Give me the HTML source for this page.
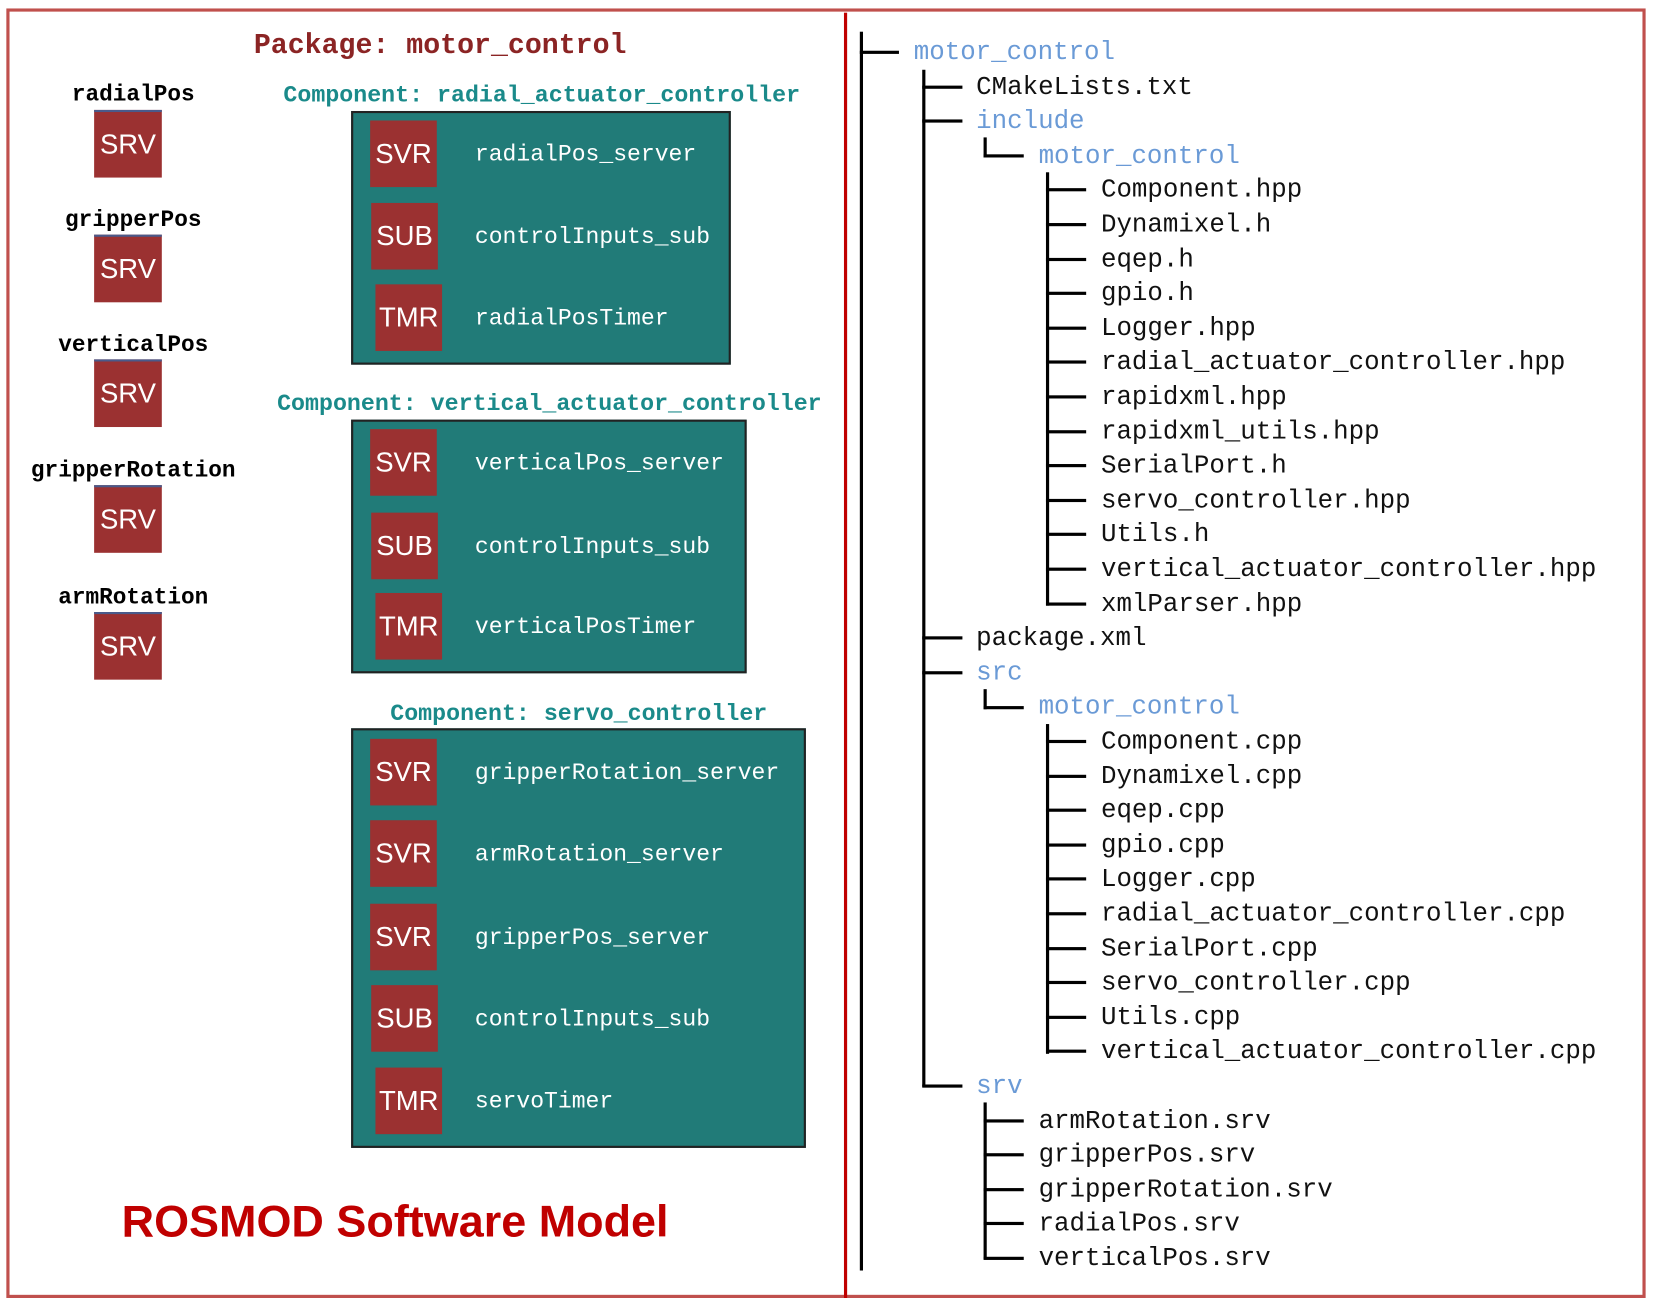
<!DOCTYPE html>
<html><head><meta charset="utf-8"><style>
html,body{margin:0;padding:0;background:#fff;}
body{width:1653px;height:1298px;overflow:hidden;position:relative;}
#c{position:absolute;left:0;top:0;width:1563px;height:1228px;transform:scale(1.0576,1.057);transform-origin:0 0;}
.a{position:absolute;white-space:pre;}
.mono{font-family:"Liberation Mono",monospace;}
.lbl{font-weight:bold;font-size:21.5px;color:#000;text-align:center;width:240px;left:6px;}
.srv{position:absolute;left:89px;width:64px;height:64px;background:#9b3131;border-top:2px solid #4a5a8a;box-sizing:border-box;color:#fff;font-family:"Liberation Sans",sans-serif;font-size:26px;line-height:60px;text-align:center;}
.comp{font-weight:bold;font-size:22px;color:#1a8a8a;}
.box{position:absolute;left:332px;background:#217b78;border:2px solid #222;box-sizing:border-box;}
.p{position:absolute;width:63px;height:63px;background:#9b3131;color:#fff;font-family:"Liberation Sans",sans-serif;font-size:26px;line-height:63px;text-align:center;}
.pt{position:absolute;left:449px;color:#fff;font-family:"Liberation Mono",monospace;font-size:21.8px;}
.t{position:absolute;font-family:"Liberation Mono",monospace;font-size:24.4px;color:#111;line-height:30px;}
.d{color:#6a9ad6;}
.v{position:absolute;width:3px;background:#000;}
.h{position:absolute;height:3px;background:#000;}
</style></head><body><div id="c">
<div style="position:absolute;left:6px;top:8px;width:1550px;height:1220px;border:3px solid #c0504d;box-sizing:border-box;"></div>
<div style="position:absolute;left:798px;top:12px;width:3px;height:1216px;background:#c00000;"></div>

<div class="a mono" style="left:240px;top:29px;font-size:26.7px;font-weight:bold;color:#8b2424;">Package: motor_control</div>

<div class="a mono lbl" style="top:78px;">radialPos</div>
<div class="srv" style="top:104px;">SRV</div>
<div class="a mono lbl" style="top:197px;">gripperPos</div>
<div class="srv" style="top:222px;">SRV</div>
<div class="a mono lbl" style="top:315px;">verticalPos</div>
<div class="srv" style="top:340px;">SRV</div>
<div class="a mono lbl" style="top:434px;">gripperRotation</div>
<div class="srv" style="top:459px;">SRV</div>
<div class="a mono lbl" style="top:554px;">armRotation</div>
<div class="srv" style="top:579px;">SRV</div>

<div class="a mono comp" style="left:268px;top:78px;">Component: radial_actuator_controller</div>
<div class="box" style="top:105px;width:359px;height:240px;"></div>
<div class="p" style="left:350px;top:114px;">SVR</div><div class="pt" style="top:134px;">radialPos_server</div>
<div class="p" style="left:351px;top:192px;">SUB</div><div class="pt" style="top:212px;">controlInputs_sub</div>
<div class="p" style="left:355px;top:269px;">TMR</div><div class="pt" style="top:289px;">radialPosTimer</div>

<div class="a mono comp" style="left:262px;top:370px;">Component: vertical_actuator_controller</div>
<div class="box" style="top:397px;width:374px;height:240px;"></div>
<div class="p" style="left:350px;top:406px;">SVR</div><div class="pt" style="top:426px;">verticalPos_server</div>
<div class="p" style="left:351px;top:485px;">SUB</div><div class="pt" style="top:505px;">controlInputs_sub</div>
<div class="p" style="left:355px;top:561px;">TMR</div><div class="pt" style="top:581px;">verticalPosTimer</div>

<div class="a mono comp" style="left:369px;top:663px;">Component: servo_controller</div>
<div class="box" style="top:689px;width:430px;height:397px;"></div>
<div class="p" style="left:350px;top:699px;">SVR</div><div class="pt" style="top:719px;">gripperRotation_server</div>
<div class="p" style="left:350px;top:776px;">SVR</div><div class="pt" style="top:796px;">armRotation_server</div>
<div class="p" style="left:350px;top:855px;">SVR</div><div class="pt" style="top:875px;">gripperPos_server</div>
<div class="p" style="left:351px;top:932px;">SUB</div><div class="pt" style="top:952px;">controlInputs_sub</div>
<div class="p" style="left:355px;top:1010px;">TMR</div><div class="pt" style="top:1030px;">servoTimer</div>

<div class="a" style="left:115px;top:1133px;font-family:'Liberation Sans',sans-serif;font-weight:bold;font-size:42.5px;color:#c00000;">ROSMOD Software Model</div>

<div class="v" style="left:813px;top:30px;height:1172px;"></div>
<div class="h" style="left:813px;top:48px;width:37px;"></div>
<div class="v" style="left:872px;top:66px;height:962px;"></div>
<div class="h" style="left:872px;top:81px;width:38px;"></div>
<div class="h" style="left:872px;top:113px;width:38px;"></div>
<div class="h" style="left:872px;top:602px;width:38px;"></div>
<div class="h" style="left:872px;top:635px;width:38px;"></div>
<div class="h" style="left:872px;top:1026px;width:38px;"></div>
<div class="v" style="left:930px;top:130px;height:19px;"></div>
<div class="h" style="left:930px;top:146px;width:38px;"></div>
<div class="v" style="left:930px;top:652px;height:19px;"></div>
<div class="h" style="left:930px;top:668px;width:38px;"></div>
<div class="v" style="left:930px;top:1043px;height:148px;"></div>
<div class="v" style="left:989px;top:163px;height:410px;"></div>
<div class="v" style="left:989px;top:685px;height:312px;"></div>

<div id="tree"></div>
<script>
var rows=[[0,'motor_control',1],[1,'CMakeLists.txt'],[1,'include',1],[2,'motor_control',1],
[3,'Component.hpp'],[3,'Dynamixel.h'],[3,'eqep.h'],[3,'gpio.h'],[3,'Logger.hpp'],[3,'radial_actuator_controller.hpp'],[3,'rapidxml.hpp'],[3,'rapidxml_utils.hpp'],[3,'SerialPort.h'],[3,'servo_controller.hpp'],[3,'Utils.h'],[3,'vertical_actuator_controller.hpp'],[3,'xmlParser.hpp'],
[1,'package.xml'],[1,'src',1],[2,'motor_control',1],
[3,'Component.cpp'],[3,'Dynamixel.cpp'],[3,'eqep.cpp'],[3,'gpio.cpp'],[3,'Logger.cpp'],[3,'radial_actuator_controller.cpp'],[3,'SerialPort.cpp'],[3,'servo_controller.cpp'],[3,'Utils.cpp'],[3,'vertical_actuator_controller.cpp'],
[1,'srv',1],[2,'armRotation.srv'],[2,'gripperPos.srv'],[2,'gripperRotation.srv'],[2,'radialPos.srv'],[2,'verticalPos.srv']];
var xs=[864,923,982,1041],h='';
rows.forEach(function(r,i){var y=49+i*32.6;
h+='<div class="t'+(r[2]?' d':'')+'" style="left:'+xs[r[0]]+'px;top:'+(y-13)+'px">'+r[1]+'</div>';
if(r[0]==3)h+='<div class="h" style="left:989px;top:'+(y-1)+'px;width:38px"></div>';
if(r[0]==2&&!r[2])h+='<div class="h" style="left:930px;top:'+(y-1)+'px;width:38px"></div>';});
document.getElementById('tree').innerHTML=h;
</script>
</div></body></html>
